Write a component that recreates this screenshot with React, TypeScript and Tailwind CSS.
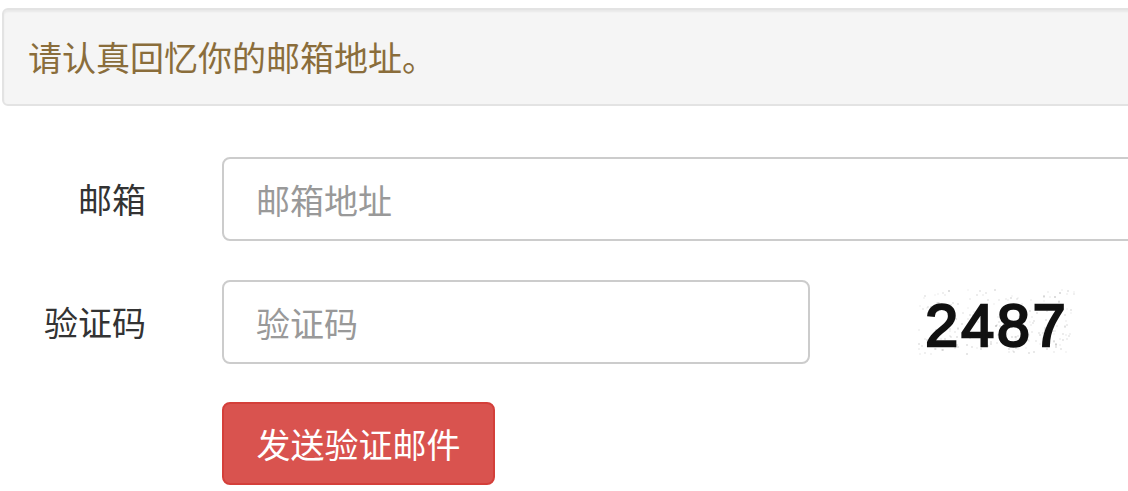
import React from "react";

const cjk = "font-['Noto_Sans_CJK_SC',sans-serif]";

let seed = 7;
const rand = () => {
  seed = (seed * 16807) % 2147483647;
  return seed / 2147483647;
};
const noise = Array.from({ length: 220 }, () => ({
  x: Math.floor(rand() * 156),
  y: Math.floor(rand() * 65),
  o: 0.03 + rand() * 0.07,
}));

const Captcha = () => (
  <div className="relative flex h-[67px] w-[158px] items-center justify-center">
    <svg className="absolute inset-0" width="158" height="67" viewBox="0 0 158 67">
      {noise.map((d, i) => (
        <rect key={i} x={d.x} y={d.y} width="2" height="2" fill="#000" opacity={d.o} />
      ))}
    </svg>
    <span className="relative mt-[8px] font-['Liberation_Sans',Arial,sans-serif] text-[59px] leading-none font-normal tracking-[3px] text-[#111] [-webkit-text-stroke:2.5px_#111]">
      2487
    </span>
  </div>
);

export default function App() {
  return (
    <div className={`min-h-[491px] overflow-hidden bg-white pt-[8px] pl-[2px] ${cjk}`}>
      <div className="flex h-[98px] w-[1200px] items-center rounded-[6px] border-2 border-[#e3e3e3] bg-[#f5f5f5] pl-[24px] shadow-[inset_0_2px_2px_rgba(0,0,0,0.05)]">
        <p className="text-[34px] leading-none text-[#8a6d3b]">请认真回忆你的邮箱地址。</p>
      </div>

      <form className="mt-[51px] flex flex-col gap-[39px]">
        <div className="flex items-center">
          <label className="w-[144px] shrink-0 text-right text-[34px] leading-none text-[#333]">邮箱</label>
          <input
            className="ml-[76px] h-[84px] w-[1000px] shrink-0 rounded-[8px] border-2 border-[#ccc] bg-white pl-[32px] text-[34px] text-[#555] outline-none placeholder:text-[#999]"
            placeholder="邮箱地址"
          />
        </div>

        <div className="flex items-center">
          <label className="w-[144px] shrink-0 text-right text-[34px] leading-none text-[#333]">验证码</label>
          <input
            className="ml-[76px] h-[84px] w-[588px] shrink-0 rounded-[8px] border-2 border-[#ccc] bg-white pl-[32px] text-[34px] text-[#555] outline-none placeholder:text-[#999]"
            placeholder="验证码"
          />
          <div className="ml-[108px] shrink-0">
            <Captcha />
          </div>
        </div>

        <div className="-mt-[1px] flex">
          <button
            type="button"
            className="ml-[220px] flex h-[83px] w-[273px] items-center justify-center rounded-[8px] border-2 border-[#d43f3a] bg-[#d9534f] text-[34px] leading-none text-white"
          >
            发送验证邮件
          </button>
        </div>
      </form>
    </div>
  );
}
